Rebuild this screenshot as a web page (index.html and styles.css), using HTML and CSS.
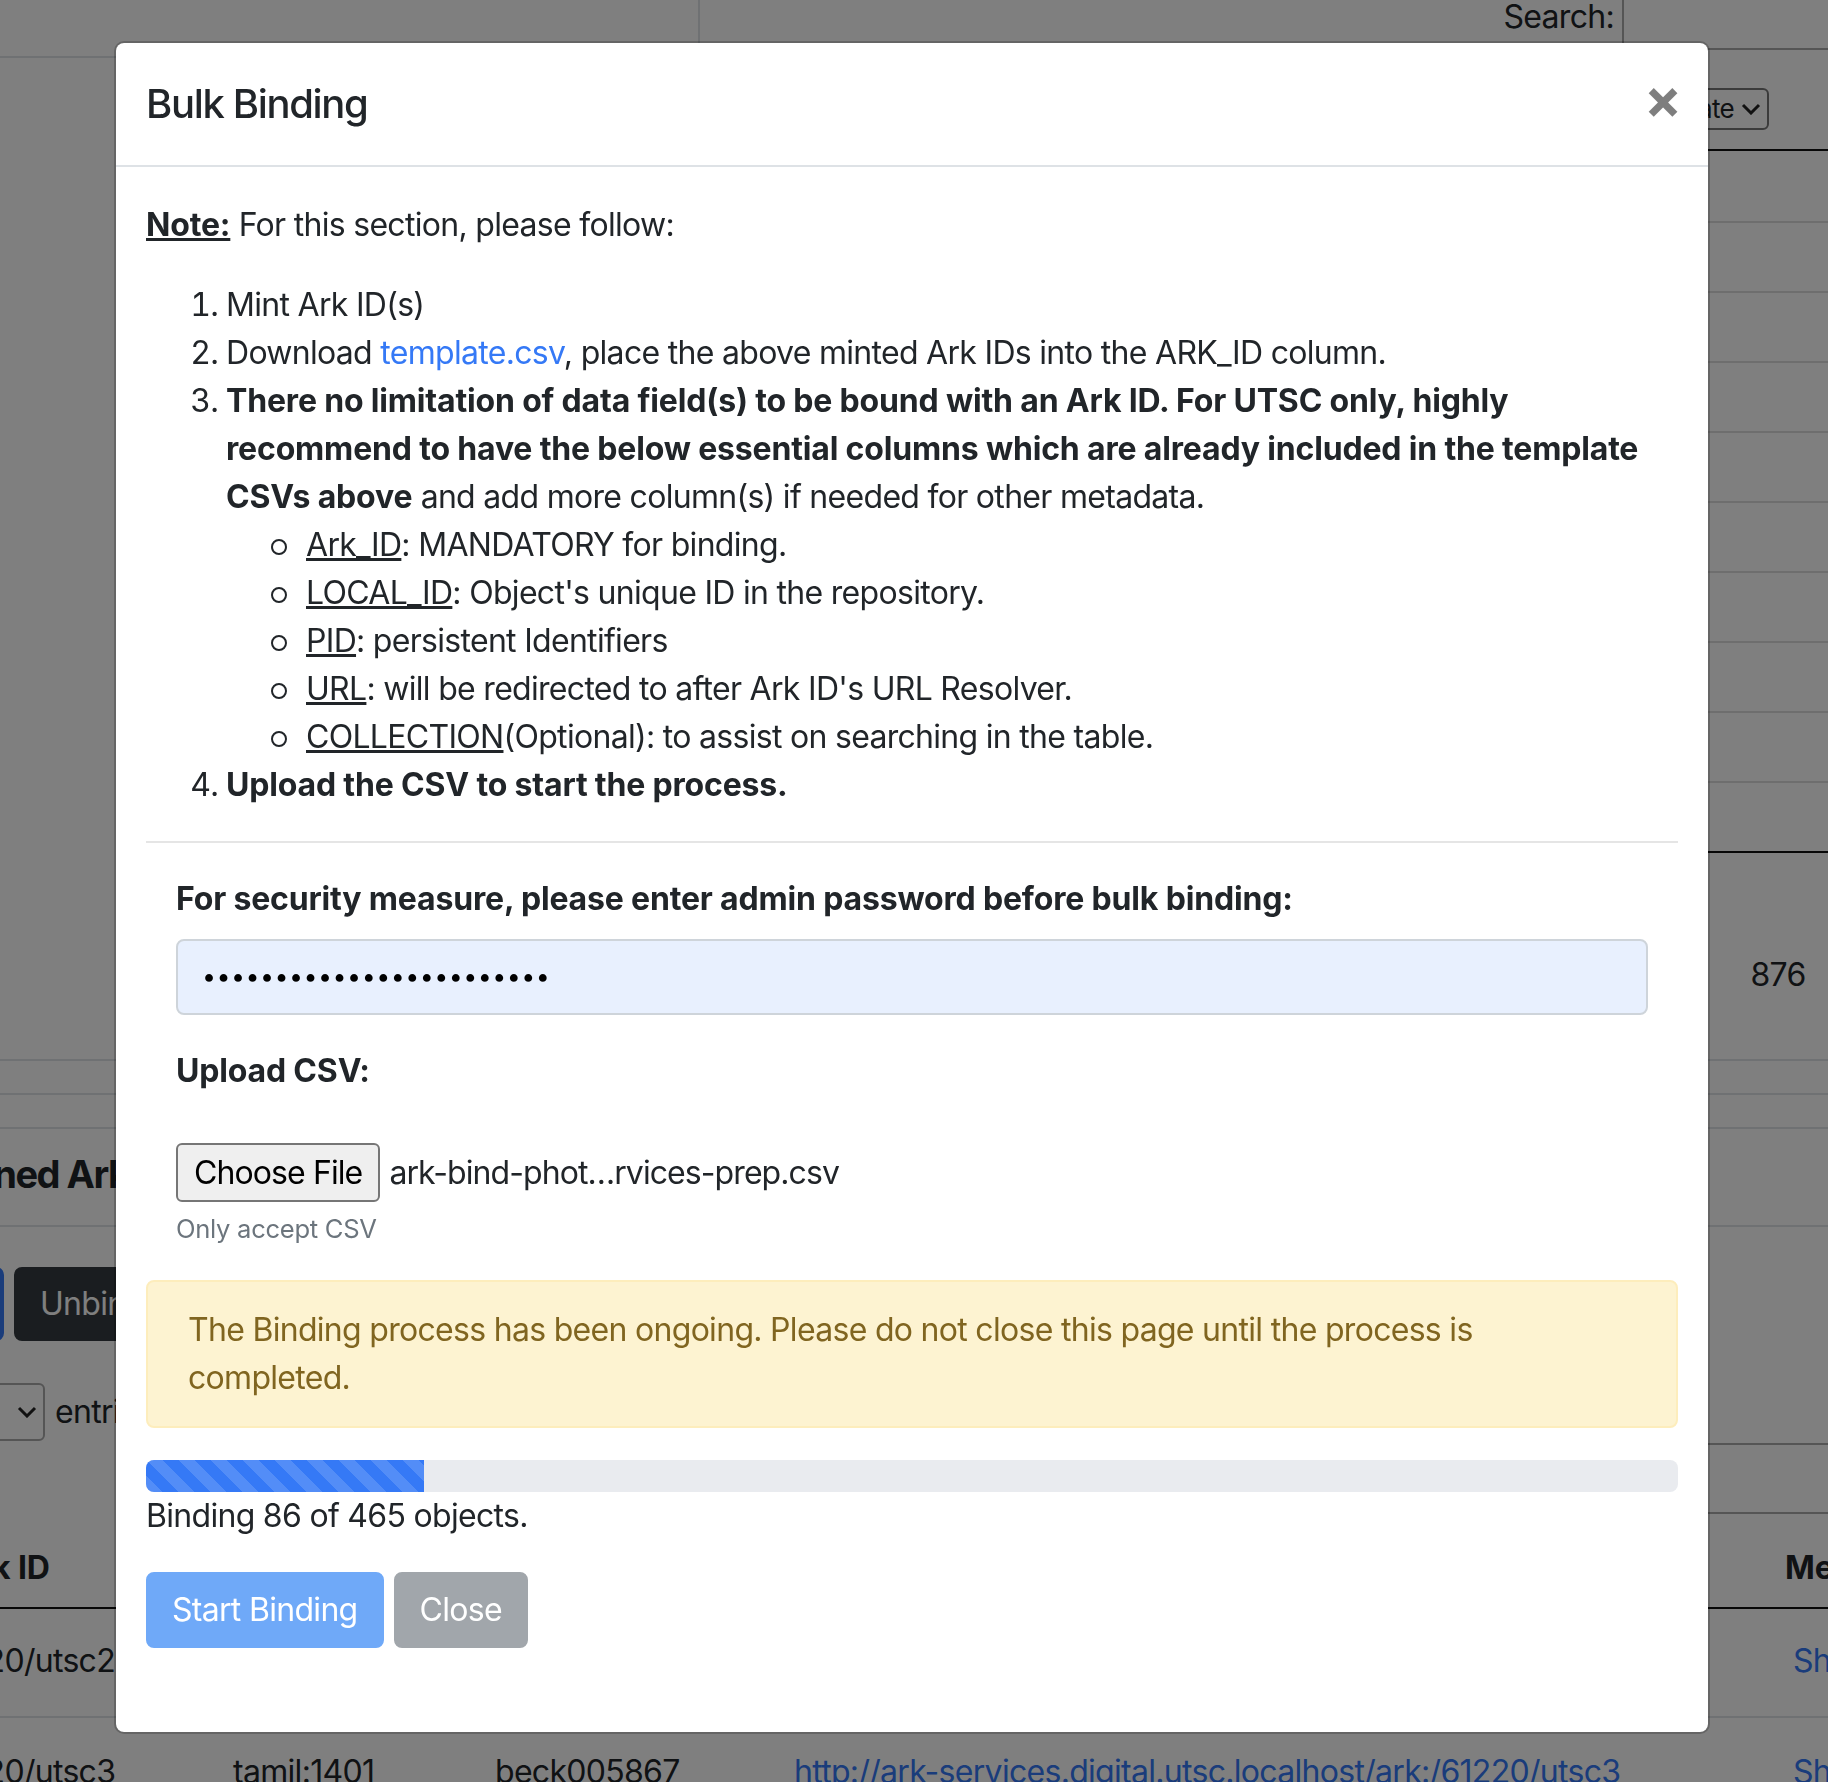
FILE: index.html
```html
<!DOCTYPE html>
<html lang="en">
<head>
<meta charset="utf-8">
<title>Bulk Binding</title>
<link rel="stylesheet" href="styles.css">
</head>
<body>
<div class="page">
  <div class="top-bar">
    <div class="top-left"></div>
    <div class="top-right">
      <label class="dt-label">Search:</label>
      <span class="dt-search"></span>
    </div>
  </div>

  <div class="tbl1">
    <div class="tbl1-spacer"></div>
    <div class="tbl1-col">
      <div class="tbl1-head">
        <span class="mini-select"><span>Date</span><svg class="chev" width="20" height="12" viewBox="0 0 20 12"><path d="M2 2 L10 10 L18 2" fill="none" stroke="#222" stroke-width="3"/></svg></span>
      </div>
      <div class="tbl1-row first"></div>
      <div class="tbl1-row"></div>
      <div class="tbl1-row"></div>
      <div class="tbl1-row"></div>
      <div class="tbl1-row"></div>
      <div class="tbl1-row"></div>
      <div class="tbl1-row"></div>
      <div class="tbl1-row"></div>
      <div class="tbl1-row"></div>
      <div class="tbl1-row last"></div>
      <div class="tbl1-foot">876</div>
    </div>
  </div>

  <div class="sec3">
    <div class="rule"></div>
    <div class="rule"></div>
    <h5 class="sec-title"><span>Assigned Ark IDs</span></h5>
  </div>

  <div class="sec4">
    <div class="btn-row">
      <button class="pbtn primary" type="button">Bind</button>
      <button class="pbtn dark" type="button">Unbind Selected</button>
    </div>
    <div class="len-row">
      <div class="len">
        <span class="len-select"><svg class="chev" width="20" height="12" viewBox="0 0 20 12"><path d="M2 2 L10 10 L18 2" fill="none" stroke="#222" stroke-width="3"/></svg></span>
        <span>entries</span>
      </div>
      <span class="dt-search2"></span>
    </div>
    <div class="t2">
      <div class="th th1">Ark ID</div>
      <div class="th">PID</div>
      <div class="th">Local ID</div>
      <div class="th">URL</div>
      <div class="th th5">Metadata</div>

      <div class="td">ark:/61220/utsc2</div>
      <div class="td">tamil:1400</div>
      <div class="td">beck005866</div>
      <div class="td"><a class="bg-link" href="#">http://ark-services.digital.utsc.localhost/ark:/61220/utsc2</a></div>
      <div class="td"><a class="bg-link" href="#">Show</a></div>

      <div class="td r2">ark:/61220/utsc3</div>
      <div class="td r2">tamil:1401</div>
      <div class="td r2">beck005867</div>
      <div class="td r2"><a class="bg-link" href="#">http://ark-services.digital.utsc.localhost/ark:/61220/utsc3</a></div>
      <div class="td r2"><a class="bg-link" href="#">Show</a></div>
    </div>
  </div>
</div>

<div class="backdrop"></div>

<div class="modal">
  <div class="modal-content">
    <div class="modal-header">
      <h5 class="modal-title">Bulk Binding</h5>
      <button class="close" type="button">×</button>
    </div>
    <div class="modal-body">
      <p class="note"><u><strong>Note:</strong></u> For this section, please follow:</p>
      <ol class="steps">
        <li>Mint Ark ID(s)</li>
        <li>Download <a class="link" href="#">template.csv</a>, place the above minted Ark IDs into the ARK_ID column.</li>
        <li><strong>There no limitation of data field(s) to be bound with an Ark ID. For UTSC only, highly recommend to have the below essential columns which are already included in the template CSVs above</strong> and add more column(s) if needed for other metadata.
          <ul class="cols">
            <li><u>Ark_ID</u>: MANDATORY for binding.</li>
            <li><u>LOCAL_ID</u>: Object's unique ID in the repository.</li>
            <li><u>PID</u>: persistent Identifiers</li>
            <li><u>URL</u>: will be redirected to after Ark ID's URL Resolver.</li>
            <li><u>COLLECTION</u>(Optional): to assist on searching in the table.</li>
          </ul>
        </li>
        <li><strong>Upload the CSV to start the process.</strong></li>
      </ol>
      <hr class="divider">
      <div class="form-wrap">
        <div class="form-group">
          <label class="form-label">For security measure, please enter admin password before bulk binding:</label>
          <div class="pw-input">••••••••••••••••••••••••</div>
        </div>
        <div class="form-group">
          <label class="form-label">Upload CSV:</label>
          <div class="file-row">
            <button class="file-btn" type="button">Choose File</button>
            <span class="file-name">ark-bind-phot…rvices-prep.csv</span>
          </div>
          <small class="help">Only accept CSV</small>
        </div>
      </div>
      <div class="alert">The Binding process has been ongoing. Please do not close this page until the process is<br>completed.</div>
      <div class="progress"><div class="progress-bar" style="width: 18.15%"></div></div>
      <div class="status">Binding 86 of 465 objects.</div>
      <div class="actions">
        <button class="btn btn-primary" type="button">Start Binding</button>
        <button class="btn btn-secondary" type="button">Close</button>
      </div>
    </div>
  </div>
</div>
</body>
</html>
```

FILE: styles.css
```css
* { box-sizing: border-box; }
html, body { margin: 0; padding: 0; }
body {
  width: 1828px;
  height: 1782px;
  overflow: hidden;
  background: #fff;
  color: #212529;
  font-family: Inter, "Liberation Sans", sans-serif;
  font-size: 32px;
  line-height: 1.5;
  letter-spacing: -0.7px;
}
strong, b { font-weight: 700; letter-spacing: -0.17px; }

/* ---------- background page ---------- */
.page { position: relative; width: 1828px; height: 1782px; overflow: hidden; }

.top-bar { display: flex; height: 58px; }
.top-left { width: 700px; flex-shrink: 0; border-right: 2px solid #dee2e6; border-bottom: 2px solid #dee2e6; }
.top-right { flex: 1; display: flex; justify-content: flex-end; align-items: flex-end; }
.dt-label { margin: 0 8px 17px 0; line-height: 48px; }
.dt-search { flex-shrink: 0; width: 216px; height: 80px; margin: 0 -10px 8px 0; border: 2px solid #aaa; border-radius: 6px; }

.tbl1 { display: flex; height: 1001px; }
.tbl1-spacer { flex: 1; }
.tbl1-col { width: 168px; flex-shrink: 0; }
.tbl1-head { height: 93px; border-bottom: 2px solid #111; padding: 30px 0 0 9px; }
.mini-select {
  display: flex; align-items: center; justify-content: flex-end; gap: 7px;
  width: 100px; height: 42px; padding-right: 6px;
  border: 2px solid #767676; border-radius: 6px;
  font-size: 26px; line-height: 1;
}
.tbl1-row { height: 70px; border-bottom: 2px solid #ddd; }
.tbl1-row.first { height: 72px; }
.tbl1-row.last { border-bottom-color: #111; }
.tbl1-foot { height: 206px; padding: 98px 0 0 68px; text-align: center; }

.sec3 { border-top: 2px solid #dee2e6; }
.rule { height: 34px; border-bottom: 2px solid #dee2e6; }
.sec-title {
  margin: 0; height: 98px; padding-top: 15px;
  border-bottom: 2px solid #dee2e6;
  font-size: 38px; font-weight: 700; line-height: 60px; white-space: nowrap;
  letter-spacing: -1.5px;
}
.sec-title span { display: inline-block; margin-left: -104px; }

.btn-row { display: flex; gap: 10px; padding-top: 40px; margin-left: -196px; }
.pbtn {
  font: inherit; line-height: 48px; padding: 11px 24px; letter-spacing: -0.7px;
  border: 2px solid; border-radius: 8px; color: #fff; white-space: nowrap;
}
.pbtn.primary { width: 200px; background: #3579f6; border-color: #3579f6; }
.pbtn.dark { background: #343a40; border-color: #343a40; }

.len-row { height: 173px; display: flex; justify-content: space-between; align-items: flex-start; }
.len { display: flex; align-items: center; gap: 10px; margin: 42px 0 0 -75px; }
.len-select {
  display: flex; align-items: center; justify-content: flex-end;
  width: 120px; height: 58px; padding-right: 6px;
  border: 2px solid #aaa; border-radius: 6px;
}
.dt-search2 { flex-shrink: 0; width: 200px; height: 71px; margin: 102px -60px 0 0; border: 2px solid #aaa; border-radius: 6px; }

.t2 {
  display: grid;
  grid-template-columns: 363px 262px 299px 999px 300px;
  width: 2223px;
  margin-left: -130px;
  white-space: nowrap;
}
.th { font-weight: 700; letter-spacing: -0.17px; padding: 30px 0 15px; border-bottom: 2px solid #111; }
.th1 { padding-left: 85px; }
.th5 { text-indent: -8px; }
.td { padding: 28px 0 31px; border-bottom: 2px solid #dee2e6; }
.td.r2 { padding-top: 30px; border-bottom: 0; }
.bg-link { color: #3579f6; text-decoration: none; }

/* ---------- backdrop + modal ---------- */
.backdrop { position: fixed; inset: 0; background: rgba(0, 0, 0, .5); }

.modal { position: absolute; left: 114px; top: 41px; width: 1596px; }
.modal-content {
  background: #fff;
  background-clip: padding-box;
  border: 2px solid rgba(0, 0, 0, .2);
  border-radius: 10px;
}
.modal-header {
  display: flex; align-items: center; justify-content: space-between;
  padding: 31px 30px;
  border-bottom: 2px solid #dee2e6;
}
.modal-title { margin: 0; font-size: 40px; font-weight: 500; line-height: 60px; letter-spacing: -1.33px; }
.close {
  padding: 0; margin: -11px -4px 0 0;
  background: transparent; border: 0;
  font-family: inherit; font-size: 56px; font-weight: 700; line-height: 1;
  color: #000; opacity: .5;
}

.modal-body { padding: 34px 30px 84px; }
.note { margin: 0 0 32px; }
.steps { margin: 0 0 32px; padding-left: 80px; }
.cols { margin: 0; padding-left: 80px; list-style: none; }
.cols li { position: relative; }
.cols li::before {
  content: "";
  position: absolute; left: -35px; top: 18px;
  width: 12px; height: 12px;
  border: 2px solid #212529; border-radius: 50%;
}
.link { color: #3579f6; text-decoration: none; }
.divider { margin: 32px 0; border: 0; border-top: 2px solid rgba(0, 0, 0, .1); }

.form-wrap { padding: 0 30px; }
.form-group { margin-bottom: 32px; }
.form-label { display: block; font-weight: 700; letter-spacing: -0.17px; margin-bottom: 16px; }
.pw-input {
  display: flex; align-items: center;
  height: 76px; padding: 0 24px;
  background: #e8f0fe;
  border: 2px solid #ced4da; border-radius: 8px;
  color: #000; font-size: 25px; letter-spacing: 0.45px;
}
.file-row { display: flex; align-items: center; padding-top: 32px; }
.file-btn {
  height: 59px; padding: 0 16px; margin-right: 9px;
  font-family: inherit; font-size: 32px; letter-spacing: -0.9px; color: #000;
  background: #efefef; border: 2px solid #767676; border-radius: 6px;
}
.file-name { letter-spacing: -0.92px; }
.help { display: block; margin-top: 8px; font-size: 25.6px; line-height: 38.4px; letter-spacing: -0.3px; color: #6c757d; }

.alert {
  margin-bottom: 32px; padding: 24px 40px;
  background: #fdf3d1; border: 2px solid #fdedbc; border-radius: 8px;
  color: #806520;
}
.progress { display: flex; height: 32px; overflow: hidden; background: #e9ebef; border-radius: 8px; }
.progress-bar {
  background-color: #3579f6;
  background-image: linear-gradient(45deg, rgba(255,255,255,.15) 25%, transparent 25%, transparent 50%, rgba(255,255,255,.15) 50%, rgba(255,255,255,.15) 75%, transparent 75%, transparent);
  background-size: 32px 32px;
}
.actions { display: flex; gap: 10px; margin-top: 32px; }
.btn {
  font-family: inherit; font-size: 32px; line-height: 48px; letter-spacing: -0.7px;
  padding: 12px 24px; border: 2px solid transparent; border-radius: 8px;
  color: #fff;
}
.btn-primary { background: #6fa9f8; border-color: #6fa9f8; }
.btn-secondary { background: #a1a6ab; border-color: #a1a6ab; }
```
